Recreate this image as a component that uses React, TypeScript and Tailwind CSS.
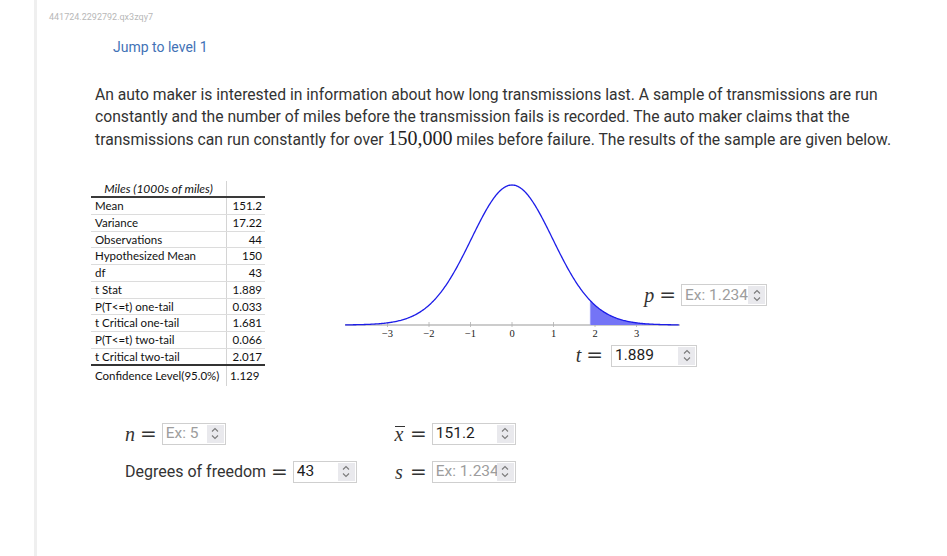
import { useMemo } from 'react'

// Number input as rendered by the browser: thin grey border, native spin buttons on the right
function Spinner() {
  return (
    <span className="flex h-[18px] w-[17px] shrink-0 flex-col items-center justify-center bg-[#e9e9ed]">
      <svg width="8" height="13" viewBox="0 0 8 13" fill="none" stroke="#7a7a7a" strokeWidth="1.1">
        <path d="M1 4.5 L4 1.5 L7 4.5" />
        <path d="M1 8.5 L4 11.5 L7 8.5" />
      </svg>
    </span>
  )
}

function NumInput({ value, placeholder, width }: { value?: string; placeholder?: string; width: string }) {
  return (
    <span className={`inline-flex h-[22px] items-center border border-[#cfcfcf] bg-white pl-[3px] pr-px ${width}`}>
      <span
        className={`flex-1 overflow-hidden whitespace-nowrap text-[15.5px] leading-[19px] ${
          value ? 'text-[#1d1d1d]' : 'text-[#9d9d9d]'
        }`}
      >
        {value ?? placeholder}
      </span>
      <Spinner />
    </span>
  )
}

function Eq() {
  return <span className="mx-[5px] font-['DejaVu_Serif',serif] text-[20px] leading-none text-[#333]">=</span>
}

function MathVar({ children }: { children: React.ReactNode }) {
  return <span className="font-['Liberation_Serif',serif] text-[20px] italic leading-none text-[#333]">{children}</span>
}

const rows = [
  ['Mean', '151.2'],
  ['Variance', '17.22'],
  ['Observations', '44'],
  ['Hypothesized Mean', '150'],
  ['df', '43'],
  ['t Stat', '1.889'],
  ['P(T<=t) one-tail', '0.033'],
  ['t Critical one-tail', '1.681'],
  ['P(T<=t) two-tail', '0.066'],
  ['t Critical two-tail', '2.017'],
]

function StatsTable() {
  return (
    <div className="w-[174px] font-['Lato',sans-serif] text-[11.5px] text-[#111]">
      <div className="flex h-[17px] border-b-2 border-[#3a3a3a]">
        <div className="w-[136px] border-r border-[#d4d4d4] text-center text-[12px] italic leading-[15px]">
          Miles (1000s of miles)
        </div>
        <div className="flex-1" />
      </div>
      {rows.map(([label, val], i) => (
        <div
          key={label}
          className={`flex h-[16.75px] ${i === rows.length - 1 ? 'border-b-2 border-[#333]' : 'border-b border-[#dcdcdc]'}`}
        >
          <div className="w-[136px] border-r border-[#d4d4d4] pl-[4px] leading-[16px]">{label}</div>
          <div className="flex-1 pr-[3px] text-right leading-[16px]">{val}</div>
        </div>
      ))}
      <div className="flex h-[20px]">
        <div className="w-[136px] border-r border-[#d4d4d4] pl-[4px] pt-[2px] leading-[16px]">Confidence Level(95.0%)</div>
        <div className="flex-1 pl-[3px] pt-[2px] leading-[16px]">1.129</div>
      </div>
    </div>
  )
}

function TChart() {
  const cx = 172
  const unit = 41.5
  const base = 144
  const peak = 140
  const tStat = 1.889
  const h = (t: number) => Math.pow(1 + (t * t) / 43, -22)
  const X = (t: number) => cx + t * unit
  const Y = (t: number) => base - peak * h(t)

  const { curve, shade } = useMemo(() => {
    const pts: string[] = []
    for (let t = -4.02; t <= 4.03; t += 0.02) pts.push(`${X(t).toFixed(2)},${Y(t).toFixed(2)}`)
    const sh: string[] = [`${X(tStat).toFixed(2)},${base}`]
    for (let t = tStat; t <= 4.0; t += 0.02) sh.push(`${X(t).toFixed(2)},${Y(t).toFixed(2)}`)
    sh.push(`${X(4).toFixed(2)},${base}`)
    return { curve: 'M' + pts.join(' L'), shade: 'M' + sh.join(' L') + ' Z' }
  }, [])

  const ticks = [-3, -2, -1, 0, 1, 2, 3]

  return (
    <svg width="345" height="165" viewBox="0 0 345 165">
      <line x1="5" y1={base} x2="340" y2={base} stroke="#9a9a9a" strokeWidth="1.2" />
      {ticks.map((t) => (
        <line key={t} x1={X(t)} y1={base - 3} x2={X(t)} y2={base + 2} stroke="#b0b0b0" strokeWidth="0.8" />
      ))}
      <path d={shade} fill="#7474f6" />
      <line x1={X(tStat)} y1={base} x2={X(tStat)} y2={Y(tStat)} stroke="#9a9af8" strokeWidth="1" />
      <path d={curve} fill="none" stroke="#1d1de8" strokeWidth="1.3" />
      {ticks.map((t) => (
        <text
          key={t}
          x={X(t)}
          y={base + 12}
          textAnchor="middle"
          fontFamily="'Liberation Serif', serif"
          fontSize="10.5"
          fill="#222"
        >
          {t < 0 ? `\u2212${-t}` : t}
        </text>
      ))}
    </svg>
  )
}

export default function App() {
  return (
    <div className="min-h-[556px] bg-white font-['Roboto',sans-serif]">
      <div className="ml-[34px] min-h-[556px] border-l-[3px] border-[#efefef] pl-[12px] pt-[12px]">
        <div className="text-[9px] leading-[11px] text-[#b8b8b8]">441724.2292792.qx3zqy7</div>
        <div className="ml-[64px] mt-[14px] text-[14px] leading-[20px] text-[#4272b6]">Jump to level 1</div>

        <p className="ml-[46px] mt-[27px] w-[810px] text-[15.7px] leading-[22px] text-[#333]">
          An auto maker is interested in information about how long transmissions last. A sample of transmissions are run
          constantly and the number of miles before the transmission fails is recorded. The auto maker claims that the
          transmissions can run constantly for over{' '}
          <span className="font-['Liberation_Serif',serif] text-[20px] leading-none text-[#222]">150,000</span> miles
          before failure. The results of the sample are given below.
        </p>

        <div className="ml-[42px] mt-[30px] flex items-start">
          <StatsTable />
          <div className="relative ml-[75px] h-[185px] w-[430px]">
            <TChart />
            <div className="absolute right-[3px] top-[103px] flex items-center">
              <MathVar>p</MathVar>
              <Eq />
              <NumInput placeholder="Ex: 1.234" width="w-[86px]" />
            </div>
            <div className="absolute right-[73px] top-[162px] flex items-center">
              <MathVar>t</MathVar>
              <Eq />
              <span className="ml-[3px]">
                <NumInput value="1.889" width="w-[86px]" />
              </span>
            </div>
          </div>
        </div>

        <div className="ml-[76px] mt-[37px] grid w-[400px] grid-cols-[270px_1fr] gap-y-[16px] text-[#333]">
          <div className="flex h-[22px] items-center">
            <MathVar>n</MathVar>
            <Eq />
            <NumInput placeholder="Ex: 5" width="w-[64px]" />
          </div>
          <div className="-ml-[2px] flex h-[22px] items-center">
            <span className="relative inline-block w-[12px] text-center leading-none">
              <MathVar>x</MathVar>
              <span className="absolute left-[2px] right-0 top-[2px] h-px bg-[#333]" />
            </span>
            <Eq />
            <NumInput value="151.2" width="w-[84px]" />
          </div>
          <div className="flex h-[22px] items-center">
            <span className="text-[16px] leading-none">Degrees of freedom</span>
            <Eq />
            <NumInput value="43" width="w-[64px]" />
          </div>
          <div className="-ml-[2px] flex h-[22px] items-center">
            <span className="w-[12px] text-center leading-none">
              <MathVar>s</MathVar>
            </span>
            <Eq />
            <NumInput placeholder="Ex: 1.234" width="w-[84px]" />
          </div>
        </div>
      </div>
    </div>
  )
}
